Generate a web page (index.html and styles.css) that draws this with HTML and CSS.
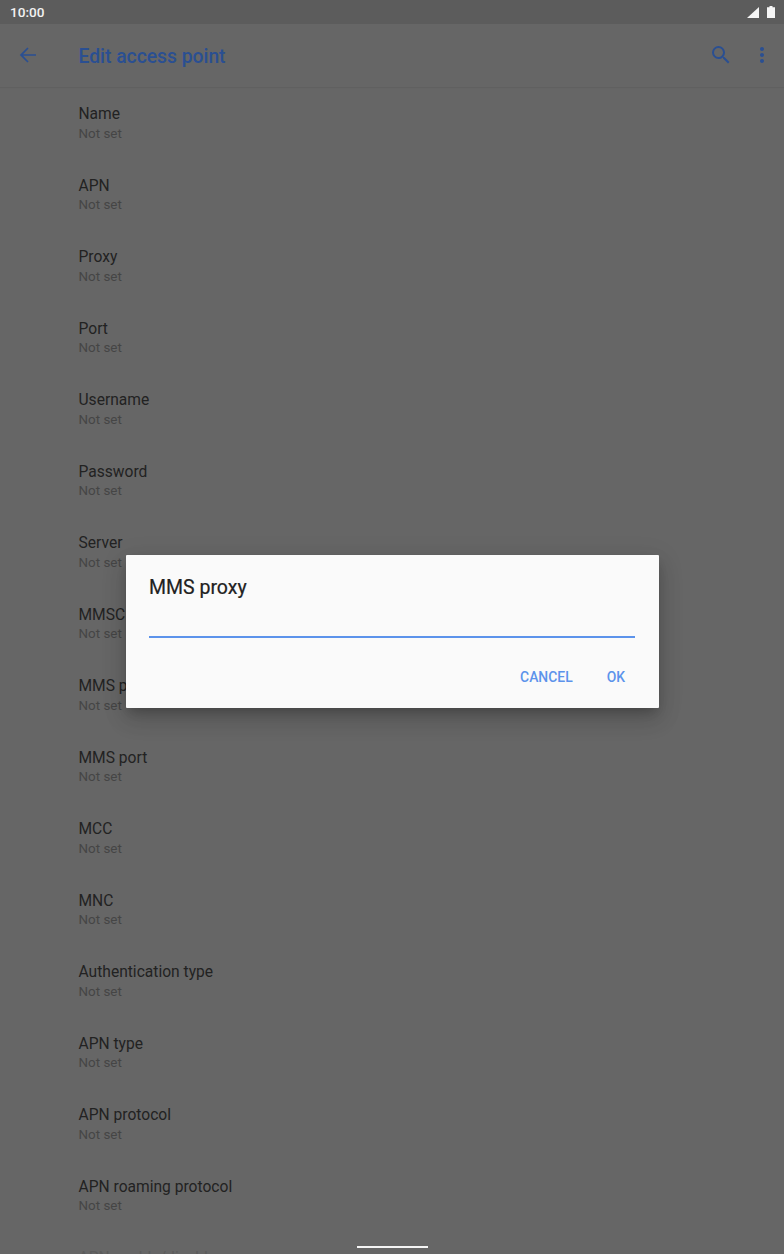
FILE: index.html
```html
<!DOCTYPE html>
<html lang="en">
<head>
<meta charset="utf-8">
<title>Edit access point</title>
<link rel="stylesheet" href="styles.css">
</head>
<body>
<div class="screen">
  <div class="statusbar">
    <span class="clock">10:00</span>
    <span class="status-icons">
      <svg viewBox="0 0 12 11" width="12" height="11"><path d="M12 0v11H0z"/></svg>
      <svg viewBox="0 0 8 12" width="8" height="12"><path d="M2.5 0h3v1.3H8V12H0V1.3h2.5z"/></svg>
    </span>
  </div>
  <header class="toolbar">
    <svg class="tb-back" viewBox="0 0 24 24" width="24" height="24"><path d="M20 11.15H7.05l5.55-5.55L11.4 4.4 3.8 12l7.6 7.6 1.2-1.2-5.55-5.55H20z"/></svg>
    <h1 class="tb-title">Edit access point</h1>
    <svg class="tb-search" viewBox="0 0 24 24" width="24" height="24"><path d="M15.5 14h-.79l-.28-.27A6.47 6.47 0 0 0 16 9.5 6.5 6.5 0 1 0 9.5 16c1.61 0 3.09-.59 4.23-1.57l.27.28v.79l5 4.99L20.49 19l-4.99-5zm-6 0C7.01 14 5 11.99 5 9.5S7.01 5 9.5 5 14 7.01 14 9.5 11.99 14 9.5 14z"/></svg>
    <svg class="tb-more" viewBox="0 0 24 24" width="24" height="24"><path d="M12 8c1.1 0 2-.9 2-2s-.9-2-2-2-2 .9-2 2 .9 2 2 2zm0 2c-1.1 0-2 .9-2 2s.9 2 2 2 2-.9 2-2-.9-2-2-2zm0 6c-1.1 0-2 .9-2 2s.9 2 2 2 2-.9 2-2-.9-2-2-2z"/></svg>
  </header>
  <main class="list">
    <div class="row"><div class="row-title">Name</div><div class="row-sub">Not set</div></div>
    <div class="row"><div class="row-title">APN</div><div class="row-sub">Not set</div></div>
    <div class="row"><div class="row-title">Proxy</div><div class="row-sub">Not set</div></div>
    <div class="row"><div class="row-title">Port</div><div class="row-sub">Not set</div></div>
    <div class="row"><div class="row-title">Username</div><div class="row-sub">Not set</div></div>
    <div class="row"><div class="row-title">Password</div><div class="row-sub">Not set</div></div>
    <div class="row"><div class="row-title">Server</div><div class="row-sub">Not set</div></div>
    <div class="row"><div class="row-title">MMSC</div><div class="row-sub">Not set</div></div>
    <div class="row"><div class="row-title">MMS proxy</div><div class="row-sub">Not set</div></div>
    <div class="row"><div class="row-title">MMS port</div><div class="row-sub">Not set</div></div>
    <div class="row"><div class="row-title">MCC</div><div class="row-sub">Not set</div></div>
    <div class="row"><div class="row-title">MNC</div><div class="row-sub">Not set</div></div>
    <div class="row"><div class="row-title">Authentication type</div><div class="row-sub">Not set</div></div>
    <div class="row"><div class="row-title">APN type</div><div class="row-sub">Not set</div></div>
    <div class="row"><div class="row-title">APN protocol</div><div class="row-sub">Not set</div></div>
    <div class="row"><div class="row-title">APN roaming protocol</div><div class="row-sub">Not set</div></div>
    <div class="row row-disabled"><div class="row-title">APN enable/disable</div></div>
  </main>

  <div class="dialog">
    <div class="dialog-title">MMS proxy</div>
    <div class="dialog-input"></div>
    <div class="dialog-actions">
      <span class="dialog-btn">CANCEL</span>
      <span class="dialog-btn">OK</span>
    </div>
  </div>

  <div class="nav-handle"></div>
</div>
</body>
</html>
```
FILE: styles.css
```css
* { box-sizing: border-box; }
html, body { margin: 0; padding: 0; }
body {
  background: #666;
  font-family: Roboto, "Liberation Sans", sans-serif;
}
.screen {
  position: relative;
  width: 784px;
  height: 1254px;
  overflow: hidden;
  background: #666;
}
.statusbar {
  height: 24px;
  background: #5c5c5c;
  display: flex;
  align-items: center;
  justify-content: space-between;
  padding: 0 9px 0 10px;
}
.clock {
  font-size: 13.6px;
  font-weight: 500;
  color: #f2f2f2;
}
.status-icons { display: flex; align-items: center; gap: 8px; }
.status-icons svg { fill: #f5f5f5; display: block; }
.toolbar {
  height: 63px;
  display: flex;
  align-items: center;
  background: #666;
  box-shadow: 0 1px 1px rgba(0,0,0,.05);
  position: relative;
  padding-bottom: 1px;
}
.toolbar svg { fill: #2a4f92; flex: none; }
.tb-back { margin-left: 16px; }
.tb-title {
  margin: 2px 0 0 38.5px;
  flex: 1;
  font-size: 19.3px;
  font-weight: 500;
  color: #2a4f92;
}
.tb-search { margin-right: 17px; }
.tb-more { margin-right: 10px; }
.list { display: block; }
.row {
  height: 71.5px;
  padding: 17px 0 0 78.5px;
}
.row-title {
  font-size: 15.6px;
  line-height: 20px;
  color: #222;
}
.row-sub {
  font-size: 13.4px;
  line-height: 20px;
  color: #454545;
  margin-top: -0.5px;
}
.row-disabled .row-title { color: #5b5b5b; }
.dialog {
  position: absolute;
  left: 125.5px;
  top: 554.5px;
  width: 533px;
  height: 153px;
  background: #fafafa;
  border-radius: 1px;
  box-shadow: 0 6px 10px -3px rgba(0,0,0,.2), 0 12px 22px 1px rgba(0,0,0,.12), 0 5px 26px 3px rgba(0,0,0,.08);
  padding: 21px 23.5px 0;
}
.dialog-title {
  font-size: 19.5px;
  line-height: 24px;
  font-weight: 400;
  color: #212121;
  -webkit-text-stroke: 0.2px #212121;
}
.dialog-input {
  margin-top: 36px;
  height: 2px;
  background: #5c93eb;
}
.dialog-actions {
  display: flex;
  justify-content: flex-end;
  gap: 34px;
  margin-top: 29px;
  padding-right: 10px;
}
.dialog-btn {
  font-size: 13.9px;
  line-height: 20px;
  font-weight: 500;
  color: #5c93eb;
}
.nav-handle {
  position: absolute;
  left: 356.5px;
  top: 1246px;
  width: 71px;
  height: 2px;
  background: #f5f5f5;
}
```
